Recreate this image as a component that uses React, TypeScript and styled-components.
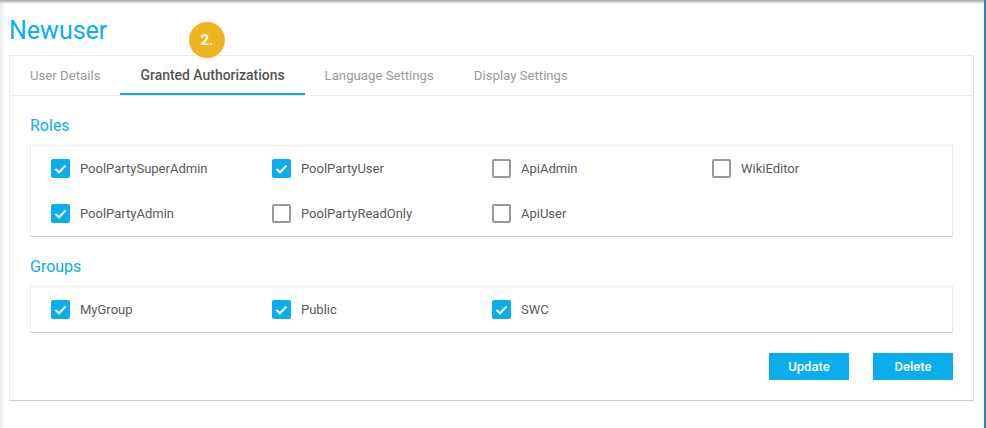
import React from "react";
import styled, { createGlobalStyle } from "styled-components";

const GlobalStyle = createGlobalStyle`
html, body {
  margin: 0;
  padding: 0;
  background: #fff;
}
`;

const Page = styled.div`
  position: relative;
  box-sizing: border-box;
  width: 986px;
  height: 428px;
  overflow: hidden;
  padding: 16px 11px 0 9px;
  background:
    linear-gradient(to bottom, #a8a8a8 0, #cfcfcf 2px, rgba(255, 255, 255, 0) 4px),
    linear-gradient(to right, #ececec 0, #f6f6f6 3px, #fff 5px);
  border-right: 2px solid #1c86d0;
  font-family: Roboto, "Liberation Sans", sans-serif;
`;

const Title = styled.h1`
  margin: 0 0 9px 0;
  height: 30px;
  font-size: 25px;
  line-height: 30px;
  font-weight: 400;
  color: #0aaeef;
`;

const Badge = styled.div`
  position: absolute;
  left: 189px;
  top: 22px;
  width: 36px;
  height: 36px;
  border-radius: 50%;
  background: #f0b41e;
  color: #fff;
  font-size: 15px;
  font-weight: 700;
  line-height: 36px;
  text-align: center;
`;

const Card = styled.div`
  box-sizing: border-box;
  width: 965px;
  height: 346px;
  background: #fff;
  border: 1px solid #ececec;
  border-bottom: 1px solid #cfcfcf;
  border-right: 1px solid #e2e2e2;
`;

const Tabs = styled.div`
  display: flex;
  height: 39px;
  border-bottom: 1px solid #ececec;
`;

const Tab = styled.div<{ $active?: boolean }>`
  box-sizing: border-box;
  height: 39px;
  padding: 0 20px;
  font-size: ${(p) => (p.$active ? "13.95px" : "13.2px")};
  line-height: 39px;
  font-weight: ${(p) => (p.$active ? 500 : 400)};
  color: ${(p) => (p.$active ? "#555" : "#999")};
  border-bottom: 2px solid ${(p) => (p.$active ? "#0aaeef" : "transparent")};
`;

const Body = styled.div`
  padding: 20px 20px 0 20px;
`;

const SectionTitle = styled.div`
  font-size: 16px;
  line-height: 20px;
  color: #0aaeef;
  margin-bottom: 9px;
`;

const Panel = styled.div`
  box-sizing: border-box;
  width: 923px;
  display: grid;
  grid-template-columns: 221px 220px 220px 220px;
  row-gap: 26px;
  padding: 13px 20px 13px 20px;
  border: 1px solid #ececec;
  border-bottom: 1px solid #cfcfcf;
  margin-bottom: 20px;
`;

const Item = styled.label`
  display: flex;
  align-items: center;
  gap: 10px;
  height: 19px;
  font-size: 13px;
  color: #5a5a5a;
`;

const Box = styled.span<{ $checked?: boolean }>`
  box-sizing: border-box;
  display: flex;
  align-items: center;
  justify-content: center;
  width: 19px;
  height: 19px;
  border-radius: 2px;
  background: ${(p) => (p.$checked ? "#0aaeef" : "#fff")};
  border: ${(p) => (p.$checked ? "none" : "2px solid #999")};
`;

const Actions = styled.div`
  display: flex;
  justify-content: flex-end;
  gap: 24px;
  width: 923px;
  margin-top: 1px;
`;

const Button = styled.button`
  width: 80px;
  height: 27px;
  padding: 0;
  border: none;
  background: #0aaeef;
  color: #fff;
  font-family: Roboto, "Liberation Sans", sans-serif;
  font-size: 13px;
  font-weight: 500;
`;

const Check = () => (
  <svg width="13" height="10" viewBox="0 0 13 10" fill="none">
    <path d="M1.5 5l3.5 3.3L11.5 1.5" stroke="#fff" strokeWidth="2" />
  </svg>
);

const CheckItem = ({ label, checked }: { label: string; checked?: boolean }) => (
  <Item>
    <Box $checked={checked}>{checked && <Check />}</Box>
    {label}
  </Item>
);

const App = () => (
  <Page>
    <GlobalStyle />
    <Title>Newuser</Title>
    <Badge>2.</Badge>
    <Card>
      <Tabs>
        <Tab>User Details</Tab>
        <Tab $active>Granted Authorizations</Tab>
        <Tab>Language Settings</Tab>
        <Tab>Display Settings</Tab>
      </Tabs>
      <Body>
        <SectionTitle>Roles</SectionTitle>
        <Panel>
          <CheckItem label="PoolPartySuperAdmin" checked />
          <CheckItem label="PoolPartyUser" checked />
          <CheckItem label="ApiAdmin" />
          <CheckItem label="WikiEditor" />
          <CheckItem label="PoolPartyAdmin" checked />
          <CheckItem label="PoolPartyReadOnly" />
          <CheckItem label="ApiUser" />
        </Panel>
        <SectionTitle>Groups</SectionTitle>
        <Panel>
          <CheckItem label="MyGroup" checked />
          <CheckItem label="Public" checked />
          <CheckItem label="SWC" checked />
        </Panel>
        <Actions>
          <Button>Update</Button>
          <Button>Delete</Button>
        </Actions>
      </Body>
    </Card>
  </Page>
);

export default App;
